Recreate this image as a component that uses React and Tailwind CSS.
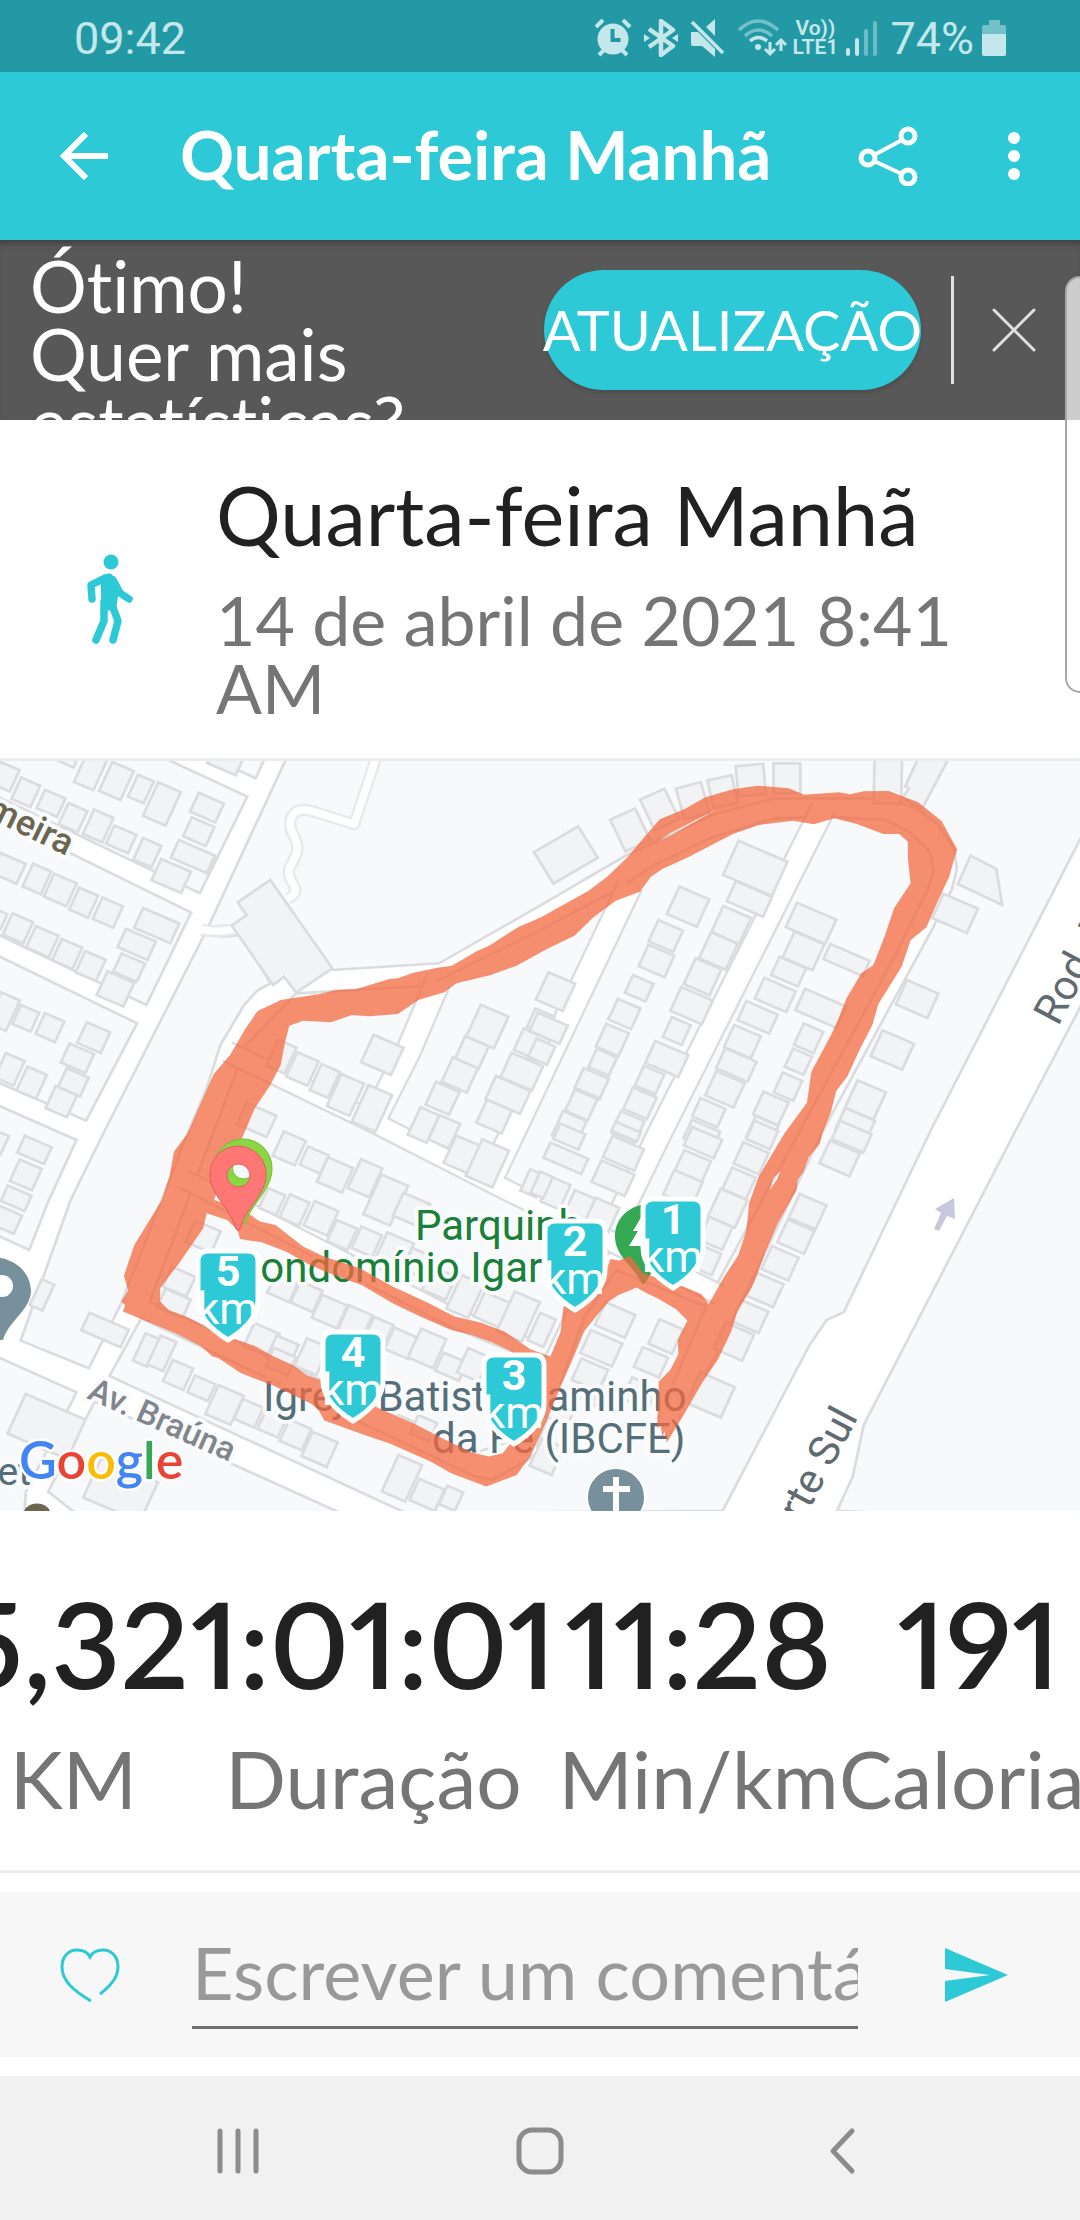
import React from "react";

/* ---------- map data ---------- */

const BLOCKS = [
  "-20,-230 718,125 580,415 -20,118",
  "560,-60 800,-60 742,70 590,-5",
  "-20,180 555,473 425,750 -20,532",
  "-20,595 398,805 250,1097 -20,976",
  "-20,1045 222,1155 140,1340 85,1485 -20,1435",
  "593,540 650,545 705,540 785,685 748,706 710,748 640,870 600,1000 545,1135 350,1650 258,1840 60,1757 205,1335 305,1125",
  "-20,1800 222,1912 140,2080 75,2210 70,2300 -20,2300",
  "275,1940 990,2275 900,2300 250,2300 140,2210 240,2010",
  "836,0 605,515 700,510 962,645 1275,625 1568,452 1820,300 2068,180 2248,130 2580,130 2660,160 2720,205 2770,280 2778,340 2765,400 2708,520 2388,1130 2080,1800 1930,2060 1890,2040 2050,1655 1790,1545 1700,1680 1590,1990 1540,2110 1430,2175 1380,2165 410,1690 318,1863 1180,2275 2098,2268 2348,1775 2400,1695 2450,1672 2703,1125 3160,205 3160,-20",
  "2430,2268 2476,2165 2508,2010 2950,1125 3160,710 3160,2300",
  "860,715 1240,692 1568,525 1790,405 1900,330 2060,250 2250,190 2400,185 2570,195 2640,230 2700,290 2712,350 2690,410 2600,600 2400,980 2080,1590 1780,1490 1700,1530 1640,1680 1540,1900 1480,2060 1390,2090 435,1640 715,870",
];

const STREETS = [
  { d: "M1272 680L1185 890L1085 1095", w: 66 },
  { d: "M660 890L1090 1105L1470 1305L2090 1620", w: 54 },
  { d: "M1830 390L1430 1260", w: 66 },
  { d: "M2390 160L1920 1125L1790 1400", w: 64 },
  { d: "M530 1270L830 1430L1320 1690L1560 1790", w: 50 },
];

// [centre x, centre y, width, height, rotation]
const HOUSES_NW = [
  [262,50,62,95],[338,78,68,95],[409,102,50,72],[470,147,72,110],[601,158,80,62],[577,230,72,62],[560,305,115,58],[497,363,95,70],
  [15,65,60,70],[75,112,60,70],[148,145,65,60],[212,188,60,70],[285,213,62,80],[352,253,70,60],[428,293,58,70],[655,15,90,60],
  [25,340,80,65],[107,372,58,75],[175,405,72,75],[243,443,60,72],[313,473,65,70],[455,512,115,65],[397,568,95,60],[375,638,75,60],
  [335,702,85,78],[52,520,65,70],[123,560,72,70],[195,597,65,70],[263,633,65,70],[0,495,25,50],[10,770,60,100],[75,790,58,62],
  [145,818,62,68],[272,848,75,68],[225,910,78,62],[213,982,70,62],[178,1040,68,72],[28,943,60,80],[92,983,62,78],[195,18,50,20],
  [817,905,58,85],[878,942,68,80],[943,978,58,85],[1003,1020,72,105],[1110,900,95,90],[1080,1060,75,120],[745,1095,95,70],
  [1415,815,88,105],[1370,893,75,75],[1335,960,80,80],[1285,1030,75,75],[1230,1110,60,90],[1290,1130,65,80],[1515,950,100,80],
  [1545,870,85,70],[1475,1020,110,75],[1435,1085,80,75],[1570,800,60,60],
];
const HOUSES_NE = [
  [625,340,155,112],[608,432,115,65],[430,455,95,90],[365,543,78,70],[338,618,82,70],[288,700,65,58],[245,777,72,68],[210,855,72,75],
  [182,922,65,60],[150,985,80,65],[120,1050,72,70],[85,1120,75,80],[555,510,88,85],[518,588,85,85],[472,665,82,85],[440,752,100,78],
  [397,828,60,65],[368,912,105,72],[318,975,65,65],[290,1045,75,70],[255,1115,75,70],[787,505,125,80],[765,588,95,85],[722,650,85,60],
  [683,720,100,68],[632,787,100,62],[588,860,85,72],[570,930,100,65],[537,1003,90,80],[490,1073,80,60],[470,1140,90,60],[815,760,130,70],
  [780,850,62,70],[750,920,60,60],[720,995,62,65],[670,1060,80,75],[645,1130,72,70],[890,615,125,50],[1095,732,100,80],[1023,885,100,85],
  [945,1035,90,90],[915,1110,95,70],[1205,475,110,80],[45,710,85,90],[25,820,95,60],[5,890,60,60],
  [75,300,150,110,-31],[262,225,80,105,-25],[347,163,78,100,-25],[443,137,75,95,-15],[530,110,72,85,-12],[612,75,80,90,-5],[717,70,78,90,0],[1010,75,80,140,1],
];
const HOUSES_SW = [
  [100,60,85,55],[75,135,70,70],[47,205,75,50],[20,270,70,60],[0,40,30,60],[122,495,40,85],[305,600,125,58],[840,55,70,80],[912,90,65,60],
  [973,135,80,80],[1060,145,68,95],[1120,210,85,130],[1195,240,85,75],[1345,75,85,90],[1415,100,85,120],[1548,160,50,70],
  [790,215,55,65],[855,240,62,75],[932,265,75,80],[993,315,65,70],[1065,335,65,70],[1145,365,85,90],[1215,400,70,70],[1275,460,75,75],[1350,500,70,110],
  [1430,540,85,80],[1505,560,80,130],[590,320,80,70],[520,455,75,65],[505,520,80,60],[820,475,70,60],[890,500,70,70],[957,545,80,75],
  [1030,580,75,85],[1100,605,60,70],[1165,640,75,70],[1240,655,80,95],[1310,710,75,60],[1375,705,70,80],[760,630,80,75],[820,665,70,75],
  [905,680,70,90],[815,695,70,60],[1230,895,60,60],[425,660,45,90],[470,670,50,95],[517,735,65,70],[585,775,65,55],[652,825,80,95],[722,850,65,65],
  [790,880,65,65],[858,915,70,70],[928,958,80,80],[1167,1045,75,120],[1240,1095,80,70],[1310,1105,50,60],[135,890,190,130],[350,1080,180,130],
];
const HOUSES_SE = [
  [75,85,120,50],[85,20,80,50],[242,70,100,70],[212,145,105,70],[250,5,80,30],[45,190,60,80],[115,230,65,80],[180,255,75,80],[5,165,40,70],
  [473,38,95,60],[443,110,85,72],[415,175,90,80],[645,15,75,60],[613,85,80,70],[578,160,75,70],[545,235,85,90],[510,310,75,75],[480,390,70,70],
  [218,570,95,75],[178,655,100,75],[145,735,85,70],[365,620,75,80],[322,697,80,65],[905,20,100,60],[870,85,95,75],[777,245,85,78],[743,320,85,75],
  [697,400,85,75],[653,480,85,75],[610,560,85,70],[563,635,90,85],[495,795,110,100],[5,600,50,90],[290,790,80,70],[20,980,70,90],[60,830,80,90],[200,800,70,80],
];

const ROUTE = [
  // outer edge
  "M545 1135L620 958L668 900L712 822L748 768L790 748L815 735L925 718L975 705L1035 702L1130 672L1155 670L1200 653L1270 638L1312 632L1385 588L1420 572L1505 516L1568 488L1708 408L1763 365L1823 305L1868 250L1916 193L1988 162L2048 127L2128 103L2200 92L2290 100L2335 119L2436 112L2468 118L2508 109L2580 108L2666 142L2734 198L2779 283L2756 365L2718 450L2690 517L2644 556L2618 635L2550 748L2533 810L2498 880L2460 965L2428 1008L2413 1070L2388 1135L2380 1167L2348 1207L2333 1250L2316 1275L2313 1305L2258 1405L2223 1490L2198 1560L2183 1597L2141 1670L2123 1730L2085 1813L2038 1885L1988 1975L1936 2063L1930 2030L1923 2045L1918 2010L1908 2020L1913 1880L1946 1845L1970 1797L1968 1755L1996 1697L1963 1663L1913 1632L1878 1615L1848 1598L1793 1622L1768 1640L1738 1675L1696 1730L1668 1800L1628 1895L1588 1995L1568 2040L1540 2105L1500 2160L1412 2195L1310 2155L1250 2120L1135 2067L1030 2030L942 1997L925 1965L905 1947L790 1890L700 1855L635 1810L617 1805L585 1775L510 1735L357 1670L363 1650L352 1640L372 1607L360 1562L390 1470L470 1335L492 1265L505 1190Z",
  // upper loop
  "M840 812L880 797L960 802L1022 780L1072 784L1155 777L1215 735L1290 712L1325 685L1425 660L1500 632L1588 582L1668 542L1723 487L1788 437L1858 410L1890 365L1923 342L1998 307L2128 237L2203 210L2303 197L2363 208L2423 190L2488 207L2565 237L2611 237L2636 260L2636 310L2644 385L2596 460L2570 540L2536 630L2501 655L2458 730L2433 795L2413 840L2356 950L2343 1043L2278 1135L2203 1265L2175 1345L2171 1390L2166 1430L2144 1500L2103 1565L2058 1647L2036 1617L1980 1593L1868 1555L1830 1503L1798 1517L1773 1512L1740 1600L1680 1645L1636 1655L1628 1730L1598 1805L1540 1783L1465 1730L1395 1703L1320 1685L1235 1640L1140 1595L1045 1540L940 1505L880 1475L800 1410L755 1400L700 1360L622 1335L640 1280L690 1180L740 1060L785 990L815 930L828 860Z",
  // lower loop
  "M600 1375L660 1395L690 1425L697 1452L760 1462L830 1490L900 1530L980 1565L1050 1590L1140 1645L1220 1685L1310 1725L1370 1740L1430 1763L1480 1787L1520 1815L1520 1985L1490 2055L1460 2095L1420 2105L1370 2093L1290 2053L1200 2005L1100 1960L1010 1915L930 1875L890 1860L850 1830L795 1805L740 1773L690 1755L640 1745L580 1705L540 1685L490 1665L465 1640L465 1600L490 1565L520 1525L590 1420Z",
  "M1913 258L1945 235L2078 165L2010 205L1950 240Z",
  "M2235 1305L2245 1270L2266 1248L2255 1275Z",
].join("");

const KM_PINS = [
  { n: "1", x: 673, y: 470 },
  { n: "2", x: 575, y: 492 },
  { n: "5", x: 228, y: 522 },
  { n: "4", x: 353, y: 603 },
  { n: "3", x: 514, y: 626 },
];

function Houses({ items, dx, dy }) {
  return (
    <g transform={`translate(${dx} ${dy})`} fill="#f1f3f4" stroke="#dadce0" strokeWidth="8">
      {items.map(([x, y, w, h, r = 24], i) => (
        <rect key={i} x={x - w / 2} y={y - h / 2} width={w} height={h} transform={`rotate(${r} ${x} ${y})`} />
      ))}
    </g>
  );
}

function KmPin({ n, x, y }) {
  return (
    <g transform={`translate(${x} ${y})`}>
      <path
        d="M-20 -32H20Q30 -32 30 -22V17C30 32 18 46 0 57C-18 46 -30 32 -30 17V-22Q-30 -32 -20 -32Z"
        fill="#2dc9d7" stroke="#fff" strokeWidth="5" strokeLinejoin="round"
      />
      <text x="0" y="3" textAnchor="middle" fontSize="43" fontWeight="700" fill="#fff">{n}</text>
      <text x="-31" y="41" fontSize="44" fill="#fff" clipPath="url(#km-clip)">km</text>
    </g>
  );
}

function RouteMap() {
  return (
    <svg viewBox="0 0 1080 750" className="block w-full" role="img" aria-label="Mapa do percurso" fontFamily="Roboto, sans-serif">
      <defs>
        <clipPath id="km-clip"><rect x="-32" y="-40" width="60" height="100" /></clipPath>
      </defs>
      <rect width="1080" height="750" fill="#fff" />
      <g transform="translate(0 -6) scale(0.3444 0.3333)">
        <g fill="#f8f9fb" stroke="#dadce0" strokeWidth="8">
          {BLOCKS.map((p, i) => <polygon key={i} points={p} />)}
        </g>
        {/* footpaths */}
        <g fill="none" strokeLinejoin="round">
          {[["#e8e9ed", 36], ["#fff", 22]].map(([c, w]) => (
            <g key={c} stroke={c} strokeWidth={w}>
              <path d="M1095 0L1028 208L905 168Q860 155 845 190Q838 215 852 240Q870 275 860 300L840 340Q835 360 850 385Q870 415 835 432" />
              <path d="M585 525Q650 535 700 515" />
            </g>
          ))}
        </g>
        <g fill="none" stroke="#dadce0">{STREETS.map((s) => <path key={s.d} d={s.d} strokeWidth={s.w + 14} />)}</g>
        <g fill="none" stroke="#fff">{STREETS.map((s) => <path key={s.d} d={s.d} strokeWidth={s.w} />)}</g>
        <Houses items={HOUSES_NW} dx={0} dy={0} />
        <Houses items={HOUSES_NE} dx={1568} dy={0} />
        <Houses items={HOUSES_SW} dx={0} dy={1125} />
        <Houses items={HOUSES_SE} dx={1568} dy={1125} />
        <g fill="#f1f3f4" stroke="#dadce0" strokeWidth="8">
          <polygon points="785,375 965,640 860,713 825,665 793,690 673,512 716,480 690,442" />
          <polygon points="2818,302 2893,342 2910,450 2781,387" />
          <polygon points="2670,0 2760,0 2678,160 2620,130 2640,100 2628,95" />
        </g>
      </g>

      {/* one-way arrow */}
      <path d="M954 437L935 448L941 452L934 468L939 470L947 455L955 458Z" fill="#c6c9de" />

      {/* points of interest below the route */}
      <path d="M-8 496a39 34 0 0 1 39 33c0 20-22 30-28 50h-11z" fill="#78909c" />
      <circle cx="2" cy="525" r="11" fill="#fff" />
      <circle cx="616" cy="736" r="29" fill="#78909c" stroke="#fff" strokeWidth="2" />
      <path d="M616 716v40M603 728h27" stroke="#fff" strokeWidth="6" fill="none" />
      <path d="M650 443c-20 0-35 14-35 32 0 20 17 28 26 46q2 4 5 0c8-16 22-24 30-46z" fill="#34a853" />
      <path d="M643 453l-10 17h5l-9 15h16z" fill="#fff" />

      <g stroke="#fafbfc" strokeWidth="8" paintOrder="stroke" strokeLinejoin="round" fontSize="42">
        <g fill="#188038">
          <text x="415" y="479">Parquinh</text>
          <text x="233" y="521">Condomínio Igara</text>
        </g>
        <g fill="#546e7a">
          <text x="263" y="650">Igreja Batista Caminho</text>
          <text x="432" y="692">da Fé (IBCFE)</text>
          <text x="-24" y="724" fontSize="39">net</text>
        </g>
        <text transform="translate(-24 51) rotate(26)" fontSize="36" fontWeight="500" fill="#6b6650">lmeira</text>
        <text transform="translate(86 637) rotate(24)" fontSize="33" fontWeight="500" fill="#80868b">Av. Braúna</text>
      </g>
      <g fill="#5f6b70" fontSize="42">
        <text transform="translate(1058 266) rotate(-62)">Rod. N</text>
        <text transform="translate(791 783) rotate(-62)">orte Sul</text>
      </g>
      <path d="M24 750a14 12 0 0 1 26 0z" fill="#6b6650" />

      <g transform="translate(0 -6) scale(0.3444 0.3333)">
        <path d={ROUTE} fill="#f36940" fillOpacity="0.75" fillRule="evenodd" />
      </g>

      {/* start and finish markers */}
      <g fillRule="evenodd" strokeWidth="1">
        <path d="M243 378a29 29 0 0 1 29 30c0 20-20 34-27 54h-4c-8-20-27-34-27-54a29 29 0 0 1 29-30zM243 396a11 11 0 1 0 1 22a11 11 0 0 0-1-22z" fill="#8bd645" stroke="#6fbf35" />
        <path d="M238 385a28 28 0 0 1 28 29c0 20-20 32-26 54q-2 3-4 0c-6-22-26-34-26-54a28 28 0 0 1 28-29zM238 403a11 11 0 1 0 1 23a11 11 0 0 0-1-23z" fill="#ff7774" stroke="#e05e5c" />
      </g>

      {KM_PINS.map((p) => <KmPin key={p.n} {...p} />)}

      <text x="19" y="718" fontSize="52" fontFamily="Lato, sans-serif" fontWeight="600" stroke="#fff" strokeWidth="5" paintOrder="stroke">
        <tspan fill="#4285f4">G</tspan><tspan fill="#ea4335">o</tspan><tspan fill="#fbbc05">o</tspan>
        <tspan fill="#4285f4">g</tspan><tspan fill="#34a853">l</tspan><tspan fill="#ea4335">e</tspan>
      </text>
    </svg>
  );
}

/* ---------- status bar ---------- */

function StatusBar() {
  return (
    <div className="flex h-[72px] items-center justify-between bg-[#2399a6] px-[74px] pt-1 font-[Roboto,sans-serif] text-[45px] leading-none text-[#c3e7ea]">
      <span>09:42</span>
      <div className="flex items-center">
        <svg width="38" height="38" viewBox="0 0 38 38" fill="currentColor">
          <circle cx="19" cy="20" r="15.500" />
          <path d="M2 8l7-7M36 8l-7-7M5 36l5-5M33 36l-5-5" stroke="currentColor" strokeWidth="4" />
          <path d="M18.500 10v11h8" stroke="#2399a6" strokeWidth="4" fill="none" />
        </svg>
        <svg className="ml-3" width="34" height="38" viewBox="0 0 34 38" fill="none" stroke="currentColor" strokeWidth="4.500">
          <path d="M5 10l24 17-12 9V2l12 9L5 28" strokeLinejoin="round" />
          <path d="M0 15l6 4-6 4zM34 15l-6 4 6 4z" fill="currentColor" stroke="none" />
        </svg>
        <svg className="ml-3" width="36" height="38" viewBox="0 0 36 38" fill="currentColor">
          <path d="M1 13h7l17 17v8L12 27H3q-2 0-2-2zM16 8l9-8v17z" />
          <path d="M2 3l31 31" stroke="currentColor" strokeWidth="3.500" />
        </svg>
        <svg className="ml-3" width="50" height="38" viewBox="0 0 50 38" fill="none" stroke="currentColor" strokeWidth="3.500">
          <path d="M1 11Q20 -7 40 11M7 17Q20 5 34 17" opacity="0.5" />
          <path d="M12 22Q20 15 29 22" />
          <circle cx="20" cy="28" r="3" fill="currentColor" stroke="none" />
          <path d="M32 23v12M27 30l5 5 5-5M43 32V21M38 26l5-5 5 5" strokeWidth="3" />
        </svg>
        <div className="ml-1 flex w-[46px] flex-col items-center text-[21px] font-semibold leading-[19px]">
          <span className="whitespace-nowrap">Vo))</span>
          <span>LTE1</span>
        </div>
        <svg className="ml-2" width="32" height="36" viewBox="0 0 32 36" stroke="currentColor" strokeWidth="4" strokeLinecap="round">
          <path d="M2 30v4M11 20v14" />
          <path d="M20 11v23M29 3v31" opacity="0.45" />
        </svg>
        <span className="ml-3">74%</span>
        <svg className="ml-2" width="24" height="36" viewBox="0 0 24 36" fill="currentColor">
          <path d="M7 0h11v5h4q2 0 2 2v8H0V7q0-2 2-2h5z" opacity="0.5" />
          <path d="M0 14h24v20q0 2-2 2H2q-2 0-2-2z" />
        </svg>
      </div>
    </div>
  );
}

function AppBar() {
  return (
    <header className="flex h-[168px] items-center bg-[#2dc9d7] pl-[60px] pr-[48px] text-white">
      <button type="button" aria-label="Voltar">
        <svg width="48" height="48" viewBox="0 0 48 48" fill="none" stroke="currentColor" strokeWidth="6">
          <path d="M48 24H5M26 2L4 24l22 22" />
        </svg>
      </button>
      <h1 className="ml-[72px] flex-1 whitespace-nowrap pb-1 text-[67px] font-bold leading-[78px]">Quarta-feira Manhã</h1>
      <button type="button" aria-label="Compartilhar">
        <svg width="60" height="60" viewBox="0 0 60 60" fill="none" stroke="currentColor" strokeWidth="5">
          <circle cx="10" cy="32" r="7" /><circle cx="50" cy="10" r="7" /><circle cx="50" cy="51" r="7" />
          <path d="M16 29L44 14M16 35l28 13" strokeWidth="4" />
        </svg>
      </button>
      <button type="button" aria-label="Mais opções" className="ml-[78px]">
        <svg width="36" height="48" viewBox="0 0 36 48" fill="currentColor">
          <circle cx="18" cy="6" r="6" /><circle cx="18" cy="24" r="6" /><circle cx="18" cy="42" r="6" />
        </svg>
      </button>
    </header>
  );
}

function UpgradeBanner() {
  return (
    <section className="relative flex h-[180px] items-center bg-[#585858] pr-[42px] text-white shadow-[inset_0_6px_6px_-3px_rgba(0,0,0,0.3)]">
      <p className="h-[180px] flex-1 overflow-hidden pl-[30px] pt-[12px] text-[71px] leading-[68px]">
        Ótimo!<br />Quer mais<br />estatísticas?
      </p>
      <button type="button" className="flex h-[120px] w-[377px] items-center justify-center whitespace-nowrap rounded-full bg-[#2dc9d7] text-[56px] leading-none shadow-md">
        ATUALIZAÇÃO
      </button>
      <div className="ml-[30px] h-[108px] w-[3px] bg-[#e0e0e0]" />
      <button type="button" aria-label="Fechar" className="ml-[36px]">
        <svg width="48" height="48" viewBox="0 0 48 48" stroke="#e0e0e0" strokeWidth="3" strokeLinecap="round">
          <path d="M4 4l40 40M44 4L4 44" />
        </svg>
      </button>
    </section>
  );
}

const STATS = [
  { value: "5,32", label: "KM", width: "w-[228px]" },
  { value: "1:01:01", label: "Duração", width: "w-[372px]" },
  { value: "11:28", label: "Min/km", width: "w-[278px]" },
  { value: "191", label: "Calorias", width: "w-[283px]" },
];

export default function App() {
  return (
    <div className="relative w-full overflow-hidden bg-white font-[Lato,sans-serif] text-[#212121] [font-variant-ligatures:none]">
      <StatusBar />
      <AppBar />
      <UpgradeBanner />

      <section className="flex items-center border-b-[3px] border-[#ededed] pb-[36px] pl-[84px] pt-[48px]">
        <svg className="mt-2 shrink-0" width="50" height="94" viewBox="0 0 50 94" fill="none" stroke="#2dc9d7" strokeLinecap="round" strokeLinejoin="round">
          <circle cx="27" cy="10" r="7.500" fill="#2dc9d7" stroke="none" />
          <path d="M25 26l-4 2 1 26 6 0 3-20z" fill="#2dc9d7" strokeWidth="9" />
          <path d="M21 26L7 33l1 14M29 28l7 13 9 6" strokeWidth="7.500" />
          <path d="M20 50v19l-8 19M27 50l7 19-5 19" strokeWidth="7.500" />
        </svg>
        <div className="ml-[82px] flex-1 pr-[100px]">
          <h2 className="whitespace-nowrap text-[81px] leading-[94px]">Quarta-feira Manhã</h2>
          <p className="mt-[24px] text-[68px] leading-[68px] text-[#757575]">14 de abril de 2021 8:41 AM</p>
        </div>
      </section>

      <RouteMap />

      <dl className="flex justify-center overflow-hidden whitespace-nowrap border-b-[3px] border-[#ededed] pb-[32px] pt-[65px] text-center">
        {STATS.map((s) => (
          <div key={s.label} className={`flex shrink-0 flex-col-reverse items-center ${s.width}`}>
            <dt className="text-[80px] leading-[120px] text-[#757575]">{s.label}</dt>
            <dd className="pb-[7px] text-[120px] font-semibold proportional-nums leading-[135px]">{s.value}</dd>
          </div>
        ))}
      </dl>

      <form className="mt-[19px] flex h-[165px] items-center bg-[#f7f7f7] pl-[60px] pr-[72px]" onSubmit={(e) => e.preventDefault()}>
        <button type="button" aria-label="Curtir">
          <svg width="60" height="54" viewBox="0 0 60 54" fill="none" stroke="#2dc9d7" strokeWidth="3">
            <path d="M40 46C52 37 58 29 58 19C58 9 52 2 43 2C36 2 32 5 30 9C28 5 24 2 17 2C8 2 2 9 2 19C2 33 14 43 31 53" />
          </svg>
        </button>
        <label htmlFor="comment" className="sr-only">Escrever um comentário</label>
        <input
          id="comment"
          type="text"
          placeholder="Escrever um comentário"
          className="ml-[72px] mt-[6px] h-[102px] min-w-0 flex-1 border-b-[3px] border-[#6f6f6f] bg-transparent pb-[8px] text-[72px] leading-[82px] outline-none placeholder:text-[#999999]"
        />
        <button type="submit" aria-label="Enviar" className="ml-[87px]">
          <svg width="63" height="54" viewBox="0 0 63 54" fill="#2dc9d7"><path d="M0 0L63 27L0 54V33L45 27L0 21Z" /></svg>
        </button>
      </form>

      <nav className="mt-[19px] flex h-[144px] items-center justify-between bg-[#f1f1f1] px-[213px] pt-[6px] text-[#8c8c8c]">
        <button type="button" aria-label="Recentes">
          <svg width="50" height="48" viewBox="0 0 50 48" stroke="currentColor" strokeWidth="5" strokeLinecap="round"><path d="M7 4v40M25 4v40M43 4v40" /></svg>
        </button>
        <button type="button" aria-label="Início">
          <svg width="48" height="48" viewBox="0 0 48 48" fill="none" stroke="currentColor" strokeWidth="5"><rect x="3" y="3" width="42" height="42" rx="13" /></svg>
        </button>
        <button type="button" aria-label="Voltar ao anterior">
          <svg width="50" height="48" viewBox="0 0 50 48" fill="none" stroke="currentColor" strokeWidth="5" strokeLinecap="round" strokeLinejoin="round"><path d="M35 4L16 24l19 20" /></svg>
        </button>
      </nav>

      {/* edge panel handle */}
      <div className="absolute right-0 top-[276px] h-[417px] w-[15px] rounded-l-2xl border-2 border-r-0 border-[#a8a8a8] bg-white/70" />
    </div>
  );
}
